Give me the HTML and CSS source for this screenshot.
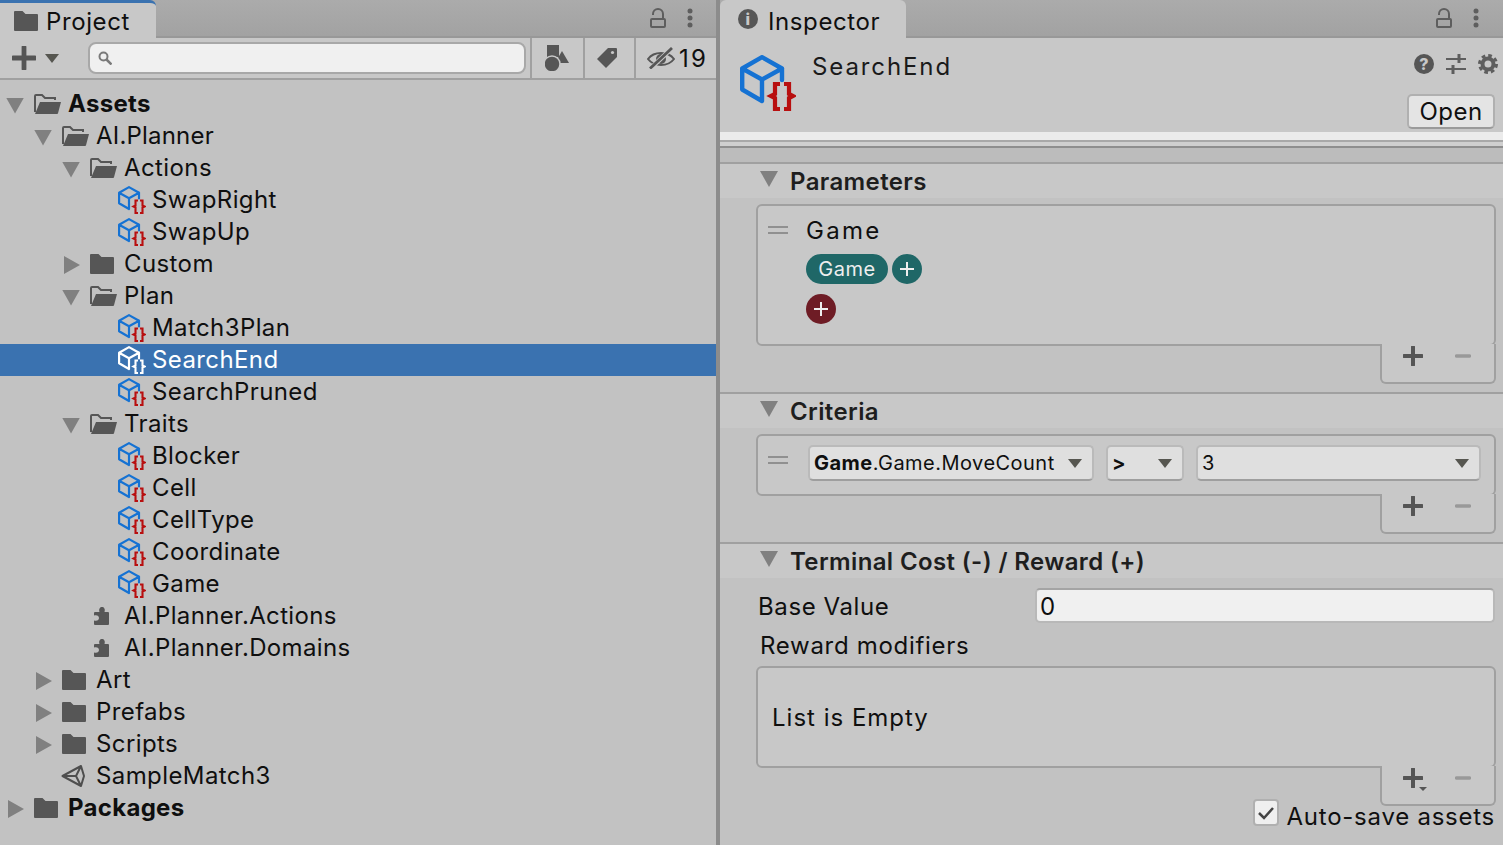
FILE: index.html
```html
<!DOCTYPE html>
<html>
<head>
  <title>Project and Inspector</title>
  <link rel="stylesheet" href="styles.css">
</head>
<body>
  <svg class="defs" width="0" height="0">
    <symbol id="script" viewBox="0 0 56 56">
      <g fill="none" stroke="currentColor" stroke-width="4.400" stroke-linejoin="round" stroke-linecap="round">
        <path d="M42 25V13.500L22 2.200 2.200 13.500v21L22 46V24.500M2.200 13.500l19.800 11 20-11"/>
      </g>
      <g fill="none" stroke="var(--brace)" stroke-width="4.200" stroke-linejoin="miter">
        <path d="M40 29h-5v10l-4 2 4 2v11h5M44 29h5v10l4 2-4 2v11h-5"/>
      </g>
    </symbol>
    <symbol id="folder" viewBox="0 0 24 20">
      <path d="M1 0h7.500l3 3H23a1 1 0 0 1 1 1v15a1 1 0 0 1-1 1H1a1 1 0 0 1-1-1V1a1 1 0 0 1 1-1z" fill="#565656"/>
    </symbol>
    <symbol id="folder-open" viewBox="0 0 27 20">
      <path d="M1 18V2a1 1 0 0 1 1-1h6l3 3h10v2" fill="none" stroke="#565656" stroke-width="2"/>
      <path d="M6 8h21l-3 11.200a1 1 0 0 1-1 .8H1z" fill="#565656"/>
    </symbol>
    <symbol id="puzzle" viewBox="0 0 15 18">
      <path d="M1 5h4.500C4.500 2 6 0 8 0s3.500 2 2.500 5H14a1 1 0 0 1 1 1v11a1 1 0 0 1-1 1H1a1 1 0 0 1-1-1v-3.500C3 14.500 5 13 5 11S3 7.500 0 8.500V6a1 1 0 0 1 1-1z" fill="#565656"/>
    </symbol>
    <symbol id="unity" viewBox="0 0 24 24">
      <path d="M1.500 12L20 2l3 10-3 10zM1.500 12H15M20 2l-5 10 5 10" fill="none" stroke="#4e4e4e" stroke-width="2" stroke-linejoin="round"/>
    </symbol>
    <symbol id="lock" viewBox="0 0 16 20">
      <path d="M3 7V6a5 5 0 0 1 10 0v5" fill="none" stroke="#5e5e5e" stroke-width="2"/>
      <rect x="1" y="11" width="14" height="8" rx="1" fill="none" stroke="#5e5e5e" stroke-width="2"/>
    </symbol>
    <symbol id="dots" viewBox="0 0 6 20">
      <circle cx="3" cy="3" r="2.500" fill="#5e5e5e"/>
      <circle cx="3" cy="10" r="2.500" fill="#5e5e5e"/>
      <circle cx="3" cy="17" r="2.500" fill="#5e5e5e"/>
    </symbol>
    <symbol id="plus" viewBox="0 0 20 20">
      <path d="M10 1v18M1 10h18" stroke="#555" stroke-width="4" stroke-linecap="round"/>
    </symbol>
    <symbol id="minus" viewBox="0 0 16 4">
      <path d="M1.500 2h13" stroke="#999" stroke-width="3.500" stroke-linecap="round"/>
    </symbol>
    <symbol id="tiny-plus" viewBox="0 0 14 14">
      <path d="M7 0v14M0 7h14" stroke="#eee" stroke-width="2"/>
    </symbol>
  </svg>

  <div class="window">
    <section class="pane project">
      <div class="tabbar">
        <div class="tab tab-active">
          <svg class="tab-icon"><use href="#folder"/></svg>
          <span>Project</span>
        </div>
        <div class="tab-tools">
          <svg class="lock"><use href="#lock"/></svg>
          <svg class="dots"><use href="#dots"/></svg>
        </div>
      </div>
      <div class="toolbar">
        <div class="create">
          <svg class="create-plus"><use href="#plus"/></svg>
          <span class="caret"></span>
        </div>
        <div class="search">
          <svg class="magnifier" viewBox="0 0 14 14"><circle cx="5.500" cy="5.500" r="4" fill="none" stroke="#7a7a7a" stroke-width="2"/><path d="M8.500 8.500l5 5" stroke="#7a7a7a" stroke-width="2.500"/></svg>
        </div>
        <div class="tool tool-type">
          <svg class="type-icon" viewBox="0 0 24 26">
            <rect x="2" y="0" width="12" height="12" fill="#565656"/>
            <path d="M17 6l7 12H10z" fill="#565656"/>
            <circle cx="7" cy="19" r="8" fill="#565656" stroke="#c8c8c8" stroke-width="1.500"/>
          </svg>
        </div>
        <div class="tool tool-label">
          <svg class="tag-icon" viewBox="0 0 20 20">
            <path d="M11 0h8a1 1 0 0 1 1 1v8L9 20 0 11z" fill="#565656"/>
            <circle cx="15.500" cy="4.500" r="1.600" fill="#c8c8c8"/>
          </svg>
        </div>
        <div class="tool tool-hidden">
          <svg class="eye-icon" viewBox="0 0 28 22">
            <path d="M1 12c6-8 20-8 26 0-6 8-20 8-26 0z" fill="none" stroke="#565656" stroke-width="2"/>
            <circle cx="14" cy="12" r="5" fill="#565656"/>
            <path d="M3 22L25 1" stroke="#c8c8c8" stroke-width="4.500"/>
            <path d="M3 21.500L25 1" stroke="#565656" stroke-width="2.800"/>
          </svg>
          <span>19</span>
        </div>
      </div>
      <div class="tree">
        <div class="row lv0 strong"><span class="arrow open"></span><svg class="icon folder-open"><use href="#folder-open"/></svg><span>Assets</span></div>
        <div class="row lv1 short"><span class="arrow open"></span><svg class="icon folder-open"><use href="#folder-open"/></svg><span>AI.Planner</span></div>
        <div class="row lv2"><span class="arrow open"></span><svg class="icon folder-open"><use href="#folder-open"/></svg><span>Actions</span></div>
        <div class="row lv3"><span class="arrow"></span><svg class="icon script"><use href="#script"/></svg><span>SwapRight</span></div>
        <div class="row lv3"><span class="arrow"></span><svg class="icon script"><use href="#script"/></svg><span>SwapUp</span></div>
        <div class="row lv2"><span class="arrow closed"></span><svg class="icon folder"><use href="#folder"/></svg><span>Custom</span></div>
        <div class="row lv2"><span class="arrow open"></span><svg class="icon folder-open"><use href="#folder-open"/></svg><span>Plan</span></div>
        <div class="row lv3"><span class="arrow"></span><svg class="icon script"><use href="#script"/></svg><span>Match3Plan</span></div>
        <div class="row lv3 selected"><span class="arrow"></span><svg class="icon script"><use href="#script"/></svg><span>SearchEnd</span></div>
        <div class="row lv3"><span class="arrow"></span><svg class="icon script"><use href="#script"/></svg><span>SearchPruned</span></div>
        <div class="row lv2"><span class="arrow open"></span><svg class="icon folder-open"><use href="#folder-open"/></svg><span>Traits</span></div>
        <div class="row lv3"><span class="arrow"></span><svg class="icon script"><use href="#script"/></svg><span>Blocker</span></div>
        <div class="row lv3"><span class="arrow"></span><svg class="icon script"><use href="#script"/></svg><span>Cell</span></div>
        <div class="row lv3"><span class="arrow"></span><svg class="icon script"><use href="#script"/></svg><span>CellType</span></div>
        <div class="row lv3"><span class="arrow"></span><svg class="icon script"><use href="#script"/></svg><span>Coordinate</span></div>
        <div class="row lv3"><span class="arrow"></span><svg class="icon script"><use href="#script"/></svg><span>Game</span></div>
        <div class="row lv2 short"><span class="arrow"></span><svg class="icon puzzle"><use href="#puzzle"/></svg><span>AI.Planner.Actions</span></div>
        <div class="row lv2 short"><span class="arrow"></span><svg class="icon puzzle"><use href="#puzzle"/></svg><span>AI.Planner.Domains</span></div>
        <div class="row lv1"><span class="arrow closed"></span><svg class="icon folder"><use href="#folder"/></svg><span>Art</span></div>
        <div class="row lv1"><span class="arrow closed"></span><svg class="icon folder"><use href="#folder"/></svg><span>Prefabs</span></div>
        <div class="row lv1"><span class="arrow closed"></span><svg class="icon folder"><use href="#folder"/></svg><span>Scripts</span></div>
        <div class="row lv1"><span class="arrow"></span><svg class="icon unity"><use href="#unity"/></svg><span>SampleMatch3</span></div>
        <div class="row lv0 strong"><span class="arrow closed"></span><svg class="icon folder"><use href="#folder"/></svg><span>Packages</span></div>
      </div>
    </section>

    <section class="pane inspector">
      <div class="tabbar">
        <div class="tab tab-inspector">
          <span class="info">i</span>
          <span>Inspector</span>
        </div>
        <div class="tab-tools">
          <svg class="lock"><use href="#lock"/></svg>
          <svg class="dots"><use href="#dots"/></svg>
        </div>
      </div>
      <div class="asset-head">
        <svg class="asset-icon"><use href="#script"/></svg>
        <div class="asset-title">SearchEnd</div>
        <div class="asset-actions">
          <div class="asset-tools">
            <span class="help">?</span>
            <svg class="sliders" viewBox="0 0 20 20">
              <path d="M0 5h20M0 15h20" stroke="#5e5e5e" stroke-width="2"/>
              <path d="M13 0v9M7 11v9" stroke="#5e5e5e" stroke-width="3"/>
            </svg>
            <svg class="gear" viewBox="0 0 20 20">
              <circle cx="10" cy="10" r="5.500" fill="none" stroke="#5e5e5e" stroke-width="4"/>
              <circle cx="10" cy="10" r="8.500" fill="none" stroke="#5e5e5e" stroke-width="3" stroke-dasharray="3.670 3.000"/>
            </svg>
          </div>
          <div class="open-btn">Open</div>
        </div>
      </div>
      <div class="head-strip"></div>
      <div class="head-band"></div>
      <div class="head-gap"></div>

      <div class="section">
        <div class="section-head"><span class="arrow open"></span><span>Parameters</span></div>
        <div class="section-body">
          <div class="list-box param-box">
            <div class="handle"></div>
            <div class="param">
              <div class="param-name">Game</div>
              <div class="chips">
                <span class="chip">Game</span>
                <span class="round teal"><svg class="tiny"><use href="#tiny-plus"/></svg></span>
              </div>
              <span class="round maroon"><svg class="tiny"><use href="#tiny-plus"/></svg></span>
            </div>
          </div>
          <div class="list-foot">
            <svg class="foot-plus"><use href="#plus"/></svg>
            <svg class="foot-minus"><use href="#minus"/></svg>
          </div>
        </div>
      </div>

      <div class="section">
        <div class="section-head"><span class="arrow open"></span><span>Criteria</span></div>
        <div class="section-body">
          <div class="list-box crit-box">
            <div class="handle"></div>
            <div class="dropdown dd-field"><span><b>Game</b>.Game.MoveCount</span><span class="caret"></span></div>
            <div class="dropdown dd-op"><b>&gt;</b><span class="caret"></span></div>
            <div class="dropdown dd-value"><span>3</span><span class="caret"></span></div>
          </div>
          <div class="list-foot">
            <svg class="foot-plus"><use href="#plus"/></svg>
            <svg class="foot-minus"><use href="#minus"/></svg>
          </div>
        </div>
      </div>

      <div class="section">
        <div class="section-head"><span class="arrow open"></span><span>Terminal Cost (-) / Reward (+)</span></div>
        <div class="section-body reward-body">
          <div class="field-row">
            <span class="field-label">Base Value</span>
            <div class="text-input">0</div>
          </div>
          <div class="modifiers-label">Reward modifiers</div>
          <div class="list-box empty-box">List is Empty</div>
          <div class="list-foot">
            <span class="plus-more">
              <svg class="foot-plus"><use href="#plus"/></svg>
              <span class="mini-caret"></span>
            </span>
            <svg class="foot-minus"><use href="#minus"/></svg>
          </div>
          <div class="autosave">
            <span class="checkbox">
              <svg viewBox="0 0 18 14"><path d="M2 7l5 5 9-10" fill="none" stroke="#444" stroke-width="2.500"/></svg>
            </span>
            <span class="autosave-label">Auto-save assets</span>
          </div>
        </div>
      </div>
    </section>
  </div>
</body>
</html>
```

FILE: styles.css
```css
:root {
  --bg: #c2c2c2;
  --panel: #c8c8c8;
  --tabbar: #a5a5a5;
  --line: #a0a0a0;
  --text: #0f0f0f;
  --icon: #565656;
  --brace: #b80f0f;
  --blue: #1572d3;
  --selected: #3a72b0;
}
* {
  box-sizing: border-box;
}
html, body {
  margin: 0;
  height: 100%;
  overflow: hidden;
}
body {
  font-family: Inter, "Noto Sans", sans-serif;
  font-size: 24px;
  color: var(--text);
  background: var(--bg);
}
.defs {
  position: absolute;
}
.window {
  display: flex;
  height: 845px;
}
.pane {
  display: flex;
  flex-direction: column;
}
.project {
  width: 720px;
  border-right: 4px solid #8c8c8c;
}
.inspector {
  flex: 1;
  min-width: 0;
}

/* tab strip */
.tabbar {
  display: flex;
  height: 38px;
  background: linear-gradient(#ababab, #a2a2a2);
  border-bottom: 2px solid #989898;
}
.tab {
  display: flex;
  align-items: center;
  height: 38px;
  background: var(--panel);
  letter-spacing: 0.6px;
}
.tab > span:last-child {
  margin-top: 2px;
}
.tab-active {
  width: 156px;
  padding-left: 14px;
  border-top: 3px solid var(--selected);
  border-top-right-radius: 6px;
}
.tab-inspector {
  width: 186px;
  padding-left: 18px;
  border-top-left-radius: 6px;
  border-top-right-radius: 6px;
}
.tab-inspector > span:last-child {
  margin-top: 4px;
}
.tab-icon {
  width: 24px;
  height: 20px;
  margin-right: 8px;
}
.info {
  width: 20px;
  height: 20px;
  margin-right: 10px;
  border-radius: 50%;
  background: var(--icon);
  color: var(--panel);
  font-size: 16px;
  font-weight: 800;
  line-height: 20px;
  text-align: center;
}
.tab-tools {
  display: flex;
  align-items: center;
  gap: 21px;
  margin-left: auto;
  padding-right: 23px;
}
.inspector .tab-tools {
  padding-right: 24px;
}
.lock {
  width: 16px;
  height: 20px;
}
.dots {
  width: 6px;
  height: 20px;
}

/* project toolbar */
.toolbar {
  display: flex;
  align-items: stretch;
  height: 42px;
  background: var(--panel);
  border-bottom: 2px solid #a0a0a0;
}
.create {
  display: flex;
  align-items: center;
  width: 88px;
  padding-left: 12px;
}
.create-plus {
  width: 24px;
  height: 24px;
  margin-right: 9px;
}
.caret {
  flex: none;
  width: 0;
  height: 0;
  border-left: 7.5px solid transparent;
  border-right: 7.5px solid transparent;
  border-top: 9px solid #565650;
}
.search {
  display: flex;
  align-items: center;
  width: 438px;
  height: 32px;
  margin: 4px 4px 0 0;
  padding-left: 8px;
  background: #f0f0f0;
  border: 2px solid #a8a8a8;
  border-radius: 8px;
}
.magnifier {
  width: 14px;
  height: 14px;
}
.tool {
  display: flex;
  align-items: center;
  border-left: 2px solid #a0a0a0;
}
.tool-type {
  width: 53px;
  padding-left: 13px;
}
.tool-label {
  width: 51px;
  padding-left: 12px;
}
.tool-hidden {
  flex: 1;
  padding-left: 11px;
  letter-spacing: 2.2px;
}
.type-icon {
  width: 24px;
  height: 26px;
}
.tag-icon {
  width: 20px;
  height: 20px;
}
.eye-icon {
  width: 28px;
  height: 22px;
  margin-right: 4px;
}

/* tree */
.tree {
  padding-top: 8px;
}
.row {
  display: flex;
  align-items: center;
  height: 32px;
  letter-spacing: 0.4px;
}
.row > span:last-child {
  margin-top: -2px;
}
.short {
  letter-spacing: 0.35px;
}
.lv1.short {
  letter-spacing: 0.2px;
}
.lv0 { padding-left: 6px; }
.lv1 { padding-left: 34px; }
.lv2 { padding-left: 62px; }
.lv3 { padding-left: 90px; }
.strong {
  font-weight: 700;
  letter-spacing: 0.3px;
}
.selected {
  background: var(--selected);
  color: #fff;
  --brace: #fff;
}
.arrow {
  flex: none;
  width: 18px;
  height: 16px;
  margin-right: 10px;
}
.arrow.open {
  margin-top: 3px;
  background: #808080;
  clip-path: polygon(0 0, 100% 0, 50% 100%);
}
.arrow.closed {
  height: 18px;
  margin-top: 2px;
  background: #808080;
  clip-path: polygon(11% 0, 100% 50%, 11% 100%);
}
.icon {
  flex: none;
  width: 28px;
  height: 28px;
  margin-right: 6px;
}
.script {
  color: var(--blue);
  margin-right: 6px;
}
.selected .script {
  color: #fff;
}
.folder {
  width: 24px;
  height: 20px;
  margin-right: 10px;
}
.folder-open {
  width: 27px;
  height: 20px;
  margin-right: 7px;
}
.puzzle {
  width: 15px;
  height: 18px;
  margin-left: 4px;
  margin-right: 15px;
}
.unity {
  width: 24px;
  height: 24px;
  margin-left: -1px;
  margin-right: 11px;
}

/* inspector head */
.asset-head {
  display: flex;
  height: 94px;
  padding: 16px 8px 0 20px;
  background: var(--panel);
  color: #1a1a1a;
}
.asset-icon {
  flex: none;
  width: 56px;
  height: 56px;
  color: var(--blue);
  margin: 1px 16px 0 0;
}
.asset-title {
  line-height: 26px;
  letter-spacing: 1.9px;
}
.asset-actions {
  display: flex;
  flex-direction: column;
  align-items: flex-end;
  margin-left: auto;
}
.asset-tools {
  display: flex;
  gap: 12px;
  height: 40px;
  margin-right: -3px;
}
.help {
  width: 20px;
  height: 20px;
  border-radius: 50%;
  background: var(--icon);
  color: var(--panel);
  font-size: 16px;
  font-weight: 800;
  line-height: 20px;
  text-align: center;
}
.sliders, .gear {
  width: 20px;
  height: 20px;
}
.open-btn {
  display: flex;
  align-items: center;
  justify-content: center;
  width: 88px;
  height: 35px;
  background: #e4e4e4;
  border: 2px solid #b0b0b0;
  border-bottom-color: #9a9a9a;
  border-radius: 5px;
  color: var(--text);
  letter-spacing: 0.5px;
}
.head-strip {
  height: 10px;
  background: #ebebeb;
  border-bottom: 2px solid #a8a8a8;
}
.head-band {
  height: 6px;
  background: #cfcfcf;
  border-bottom: 2px solid #8e8e8e;
}
.head-gap {
  height: 14px;
  background: #bcbcbc;
}

/* sections */
.section {
  border-top: 2px solid var(--line);
}
.section-head {
  display: flex;
  align-items: center;
  height: 34px;
  padding-left: 40px;
  background: var(--panel);
  color: #1e1e1e;
  font-weight: 600;
  letter-spacing: 0.37px;
}
.section-head .arrow {
  margin: -4px 12px 0 0;
}
.section-body {
  display: flex;
  flex-direction: column;
  padding: 6px 7px 8px 36px;
}
.list-box {
  display: flex;
  background: var(--panel);
  border: 2px solid var(--line);
  border-radius: 6px;
}
.list-foot {
  display: flex;
  align-items: flex-start;
  gap: 32px;
  align-self: flex-end;
  width: 116px;
  height: 40px;
  margin-top: -2px;
  padding: 0 0 0 21px;
  background: var(--panel);
  border: 2px solid var(--line);
  border-top: 0;
  border-radius: 0 0 6px 6px;
}
.foot-plus {
  flex: none;
  width: 20px;
  height: 20px;
  margin-top: 2px;
}
.foot-minus {
  flex: none;
  width: 16px;
  height: 4px;
  margin-top: 10px;
}
.plus-more {
  position: relative;
  display: flex;
}
.mini-caret {
  position: absolute;
  right: -4px;
  top: 21px;
  width: 0;
  height: 0;
  border-left: 4px solid transparent;
  border-right: 4px solid transparent;
  border-top: 4px solid #555;
}
.handle {
  flex: none;
  width: 20px;
  height: 8px;
  border-top: 2px solid #909090;
  border-bottom: 2px solid #909090;
}

/* parameters */
.param-box {
  height: 142px;
  padding: 20px 0 0 10px;
}
.param {
  margin: -12px 0 0 18px;
}
.param-name {
  height: 40px;
  line-height: 34px;
  letter-spacing: 2.3px;
}
.chips {
  display: flex;
  gap: 4px;
  margin-bottom: 10px;
}
.chip {
  width: 82px;
  height: 30px;
  border-radius: 15px;
  background: #1f6767;
  color: #eee;
  font-size: 20px;
  letter-spacing: 0.6px;
  line-height: 30px;
  text-align: center;
}
.round {
  display: flex;
  align-items: center;
  justify-content: center;
  width: 30px;
  height: 30px;
  border-radius: 50%;
}
.teal {
  background: #1f6767;
}
.maroon {
  background: #6e1c25;
}
.tiny {
  width: 14px;
  height: 14px;
}

/* criteria */
.crit-box {
  align-items: center;
  height: 62px;
  padding: 0 13px 4px 10px;
  font-size: 20px;
}
.crit-box .handle {
  margin: -6px 20px 0 0;
}
.dropdown {
  display: flex;
  align-items: center;
  justify-content: space-between;
  height: 36px;
  padding: 0 10px 0 4px;
  background: #dfdfdf;
  border: 2px solid #bababa;
  border-bottom-color: #9e9e9e;
  border-radius: 5px;
  letter-spacing: 0.47px;
}
.dd-field {
  width: 286px;
  margin-right: 12px;
}
.dd-op {
  width: 78px;
  margin-right: 12px;
}
.dd-value {
  flex: 1;
}

/* terminal cost */
.reward-body {
  padding: 10px 7px 0 36px;
}
.field-row {
  display: flex;
  justify-content: space-between;
  height: 35px;
  padding: 0 1px 0 2px;
}
.field-label {
  line-height: 38px;
  letter-spacing: 0.6px;
}
.text-input {
  width: 460px;
  height: 35px;
  padding-left: 3px;
  background: #f0f0f0;
  border: 2px solid #b8b8b8;
  border-top-color: #a4a4a4;
  border-radius: 5px;
  line-height: 34px;
}
.modifiers-label {
  height: 43px;
  padding-left: 4px;
  line-height: 46px;
  letter-spacing: 0.7px;
}
.empty-box {
  align-items: center;
  height: 102px;
  padding-left: 14px;
  letter-spacing: 1px;
}
.autosave {
  display: flex;
  align-items: center;
  align-self: flex-end;
  height: 27px;
  margin: -7px 1px 0 0;
  gap: 8px;
  letter-spacing: 0.75px;
}
.autosave-label {
  margin-top: 7px;
}
.checkbox {
  display: flex;
  align-items: center;
  justify-content: center;
  width: 26px;
  height: 27px;
  background: #efefef;
  border: 2px solid #b0b0b0;
  border-radius: 4px;
}
.checkbox svg {
  width: 18px;
  height: 14px;
}
```
